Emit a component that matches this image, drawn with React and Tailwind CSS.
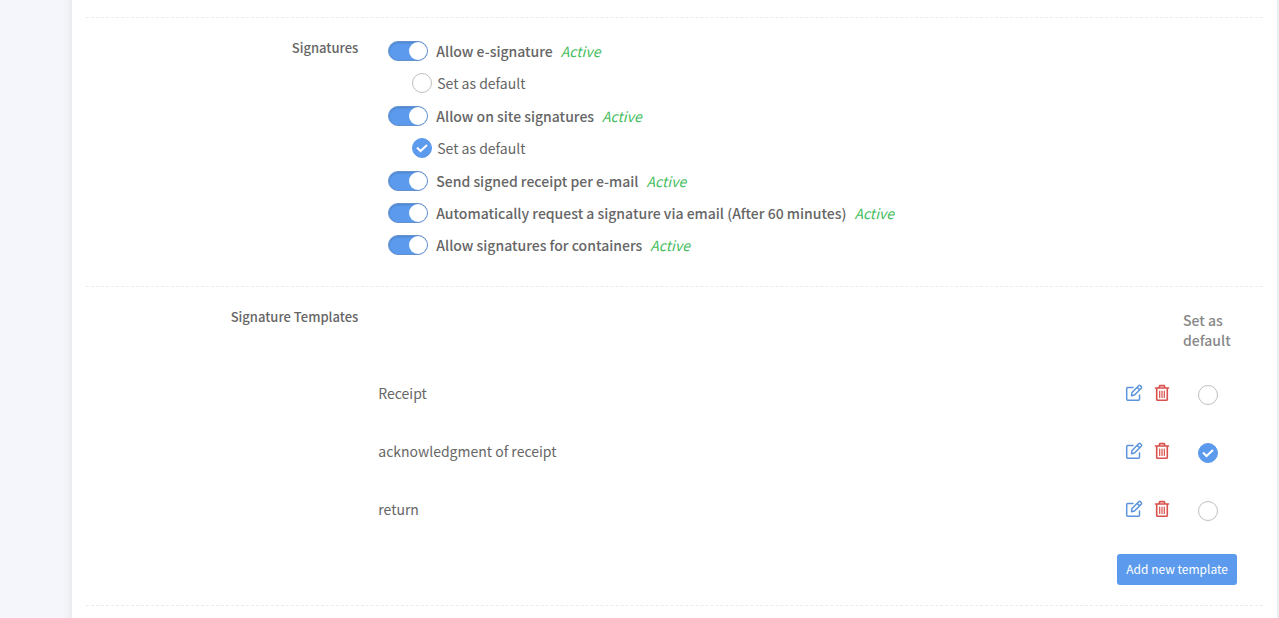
import React, { useState } from 'react';

const signatureOptions = [
  { id: 'esign', label: 'Allow e-signature', hasDefault: true },
  { id: 'onsite', label: 'Allow on site signatures', hasDefault: true },
  { id: 'receipt', label: 'Send signed receipt per e-mail' },
  { id: 'auto', label: 'Automatically request a signature via email (After 60 minutes)' },
  { id: 'containers', label: 'Allow signatures for containers' },
];

const templates = ['Receipt', 'acknowledgment of receipt', 'return'];

const EditIcon = () => (
  <svg width="18" height="18" viewBox="0 0 18 18" fill="none" stroke="currentColor" strokeWidth="1.5" strokeLinecap="round" strokeLinejoin="round">
    <path d="M8 3.5H2.7c-.6 0-1 .4-1 1v10.800c0 .6.4 1 1 1h10.800c.6 0 1-.4 1-1V11" />
    <path d="M6.500 11.700l.5-3.200 6.700-6.700c.5-.5 1.300-.5 1.800 0l.7.7c.5.500.5 1.300 0 1.800L9.500 11l-3 .7zM12.200 3.400l2.400 2.400" />
  </svg>
);

const TrashIcon = () => (
  <svg width="16" height="18" viewBox="0 0 16 18" fill="none" stroke="currentColor" strokeLinecap="round" strokeLinejoin="round">
    <path strokeWidth="1.600" d="M1.500 4h13M5 3.800l.8-2.200h4.400l.8 2.200M2.700 4.200v11c0 .6.4 1.100 1 1.100h8.600c.6 0 1-.5 1-1.100v-11" />
    <path strokeWidth="1.200" d="M5.700 7v6.500M8 7v6.500M10.300 7v6.500" />
  </svg>
);

const Toggle = ({ checked, onChange }) => (
  <input
    type="checkbox"
    role="switch"
    checked={checked}
    onChange={onChange}
    className="h-5 w-10 shrink-0 cursor-pointer appearance-none rounded-full border border-gray-400 bg-gray-300 inset-shadow-[0_1px_2px_#00000026] before:block before:size-[18px] before:rounded-full before:bg-white checked:border-[#6592cf] checked:bg-[#5b9aec] checked:before:ml-5"
  />
);

const RoundRadio = (props) => (
  <span className="grid size-5 shrink-0 place-items-center">
    <input
      type="radio"
      className="peer size-5 cursor-pointer appearance-none rounded-full border border-[#bfbfbf] bg-white [grid-area:1/1] checked:border-[#5b9aec] checked:bg-[#5b9aec]"
      {...props}
    />
    <svg width="14" height="14" viewBox="0 0 14 14" fill="none" stroke="#fff" strokeWidth="2" className="pointer-events-none invisible [grid-area:1/1] peer-checked:visible">
      <path d="M2 6.500l3.500 3.500L12 4" />
    </svg>
  </span>
);

const Section = ({ title, children }) => (
  <section className="flex">
    <h2 className="w-1/4 shrink-0 pt-5 pr-[15px] text-right text-[13px] leading-5 font-medium">{title}</h2>
    <div className="min-w-0 flex-1">{children}</div>
  </section>
);

const Divider = () => <hr className="mx-[14px] border-t border-dashed border-[#ececec]" />;

export default function App() {
  const [active, setActive] = useState({ esign: true, onsite: true, receipt: true, auto: true, containers: true });
  const [defaultSignature, setDefaultSignature] = useState('onsite');
  const [defaultTemplate, setDefaultTemplate] = useState(templates[1]);

  const toggle = (id) => setActive({ ...active, [id]: !active[id] });

  return (
    <div className="min-h-screen overflow-hidden bg-[#f5f6fb] pr-0.5 pl-[72px] font-['Noto_Sans_CJK_SC',sans-serif] text-sm leading-5 text-[#666]">
      <main className="min-h-screen bg-white pt-[17px] shadow-[0_0_6px_3px_#e9eaec]">
        <Divider />
        <Section title="Signatures">
          <div className="px-[15px] pt-[17px] pb-[25px]">
            {signatureOptions.map(({ id, label, hasDefault }) => (
              <React.Fragment key={id}>
                <label className="flex h-8 items-center gap-2 font-medium">
                  <Toggle checked={active[id]} onChange={() => toggle(id)} />
                  <span>{label}</span>
                  {active[id] && <em className="font-normal text-[#43bd5b]">Active</em>}
                </label>
                {hasDefault && (
                  <label className="flex h-[33px] items-center gap-[5px] pb-0.5 pl-6">
                    <RoundRadio name="signature" checked={defaultSignature === id} onChange={() => setDefaultSignature(id)} />
                    Set as default
                  </label>
                )}
              </React.Fragment>
            ))}
          </div>
        </Section>
        <Divider />
        <Section title="Signature Templates">
          <div className="pt-[18px] pr-10 pb-5">
            <table className="w-full">
              <thead>
                <tr className="h-[59px] text-left align-top text-[#888]">
                  <td />
                  <td />
                  <th className="w-[59px] p-[5px] font-medium">Set as default</th>
                </tr>
              </thead>
              <tbody>
                {templates.map((name) => (
                  <tr key={name} className="h-[58px]">
                    <td className="px-[5px]">{name}</td>
                    <td className="w-[53px]">
                      <div className="flex items-center gap-[11px]">
                        <button type="button" aria-label={`Edit ${name}`} className="cursor-pointer text-[#5b94dc]"><EditIcon /></button>
                        <button type="button" aria-label={`Delete ${name}`} className="cursor-pointer text-[#d9504c]"><TrashIcon /></button>
                      </div>
                    </td>
                    <td className="pt-1 pl-5">
                      <RoundRadio name="template" aria-label={`Set ${name} as default`} checked={defaultTemplate === name} onChange={() => setDefaultTemplate(name)} />
                    </td>
                  </tr>
                ))}
              </tbody>
            </table>
            <div className="flex justify-end pt-4">
              <button type="button" className="h-[31px] cursor-pointer rounded-[3px] bg-[#5b9aec] px-[9px] pb-0.5 text-xs text-white">Add new template</button>
            </div>
          </div>
        </Section>
        <Divider />
      </main>
    </div>
  );
}
